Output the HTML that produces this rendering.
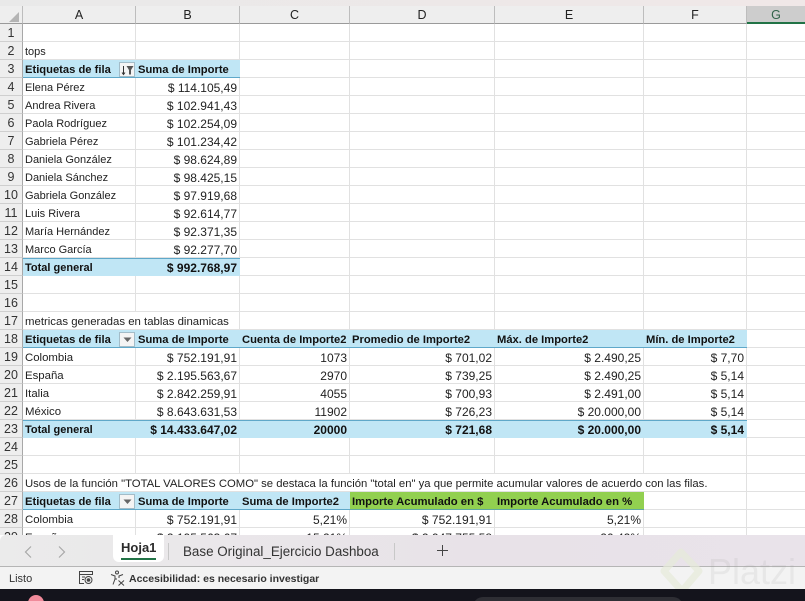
<!DOCTYPE html>
<html>
<head>
<meta charset="utf-8">
<style>
html,body{margin:0;padding:0;width:805px;height:601px;overflow:hidden;background:#fff;}
body{position:relative;font-family:"Liberation Sans",sans-serif;color:#1c1c1c;}
.abs{position:absolute;}
#top{left:0;top:0;width:805px;height:6px;background:linear-gradient(90deg,#e9e9e9,#f0e8e8);}
#colh{left:0;top:6px;width:805px;height:18px;background:#eeeeee;}
#colh div{position:absolute;top:0;height:18px;line-height:18px;text-align:center;font-size:12.5px;color:#222;border-right:1px solid #bdbdbd;box-sizing:border-box;border-bottom:1px solid #9a9a9a;}
#colh .g{background:#cdcdcd;color:#33634a;border-right:0;border-bottom:2px solid #217346;}
#sheet{left:0;top:24px;width:805px;height:511px;overflow:hidden;}
table{border-collapse:separate;border-spacing:0;table-layout:fixed;width:805px;font-size:11px;}
td{height:18px;padding:3px 2px 0;box-sizing:border-box;border-right:1px solid #e1e1e1;border-bottom:1px solid #e1e1e1;white-space:nowrap;overflow:hidden;line-height:14px;color:#222;vertical-align:top;}
td.n{background:#eeeeee;text-align:center;padding:1px 0 0;line-height:16px;font-size:12.5px;color:#333;border-right:1px solid #a8a8a8;border-bottom:1px solid #cfcfcf;}
td.r{text-align:right;font-size:12px;}
td.c{font-size:11.4px;}
td.h{background:#c0e6f5;font-weight:bold;font-size:11.2px;border-right:0;border-bottom:1px solid #5fa8c9;color:#111;position:relative;}
td.t{background:#c0e6f5;font-weight:bold;border-right:0;border-bottom:0;border-top:1px solid #5fa8c9;padding-top:2px;color:#111;}
td.t.r{padding-right:3px;}
td.v{background:#92d050;font-weight:bold;font-size:11.3px;border-right:0;border-bottom:1px solid #5fa8a0;color:#111;}
td.lr{border-right:0;}
.btn{position:absolute;right:1px;top:2px;width:16px;height:15px;box-sizing:border-box;background:#f4f4f4;border:1px solid #a3bcc8;}
#tabs{left:0;top:535px;width:805px;height:32px;background:linear-gradient(90deg,#ebebeb,#e8e2e8 60%,#e9e3ea);border-bottom:1px solid #b5b5b5;box-sizing:border-box;border-radius:6px 0 0 0;}
#status{left:0;top:567px;width:805px;height:22px;background:#f3f3f3;}
#black{left:0;top:589px;width:805px;height:12px;background:#14141c;overflow:hidden;}
</style>
</head>
<body>
<div class="abs" id="top"></div>
<div class="abs" id="colh">
<div style="left:0;width:23px"></div>
<div style="left:23px;width:113px">A</div>
<div style="left:136px;width:104px">B</div>
<div style="left:240px;width:110px">C</div>
<div style="left:350px;width:145px">D</div>
<div style="left:495px;width:149px">E</div>
<div style="left:644px;width:103px">F</div>
<div class="g" style="left:747px;width:58px">G</div>
<svg style="position:absolute;left:8px;top:6px" width="13" height="11"><path d="M11 0V10H1Z" fill="#b4b4b4"/></svg>
</div>
<div class="abs" id="sheet">
<table>
<colgroup><col style="width:23px"><col style="width:113px"><col style="width:104px"><col style="width:110px"><col style="width:145px"><col style="width:149px"><col style="width:103px"><col style="width:58px"></colgroup>
<tr><td class="n">1</td><td></td><td></td><td></td><td></td><td></td><td></td><td class="lr"></td></tr>
<tr><td class="n">2</td><td>tops</td><td></td><td></td><td></td><td></td><td></td><td class="lr"></td></tr>
<tr><td class="n">3</td><td class="h">Etiquetas de fila<span class="btn"><svg style="position:absolute;left:1px;top:1px" width="13" height="12"><path d="M2.500 2V10M1 8.500L2.500 10.500L4 8.500" stroke="#333" fill="none"/><path d="M5.500 2H12.500L10 6V10.500H8V6Z" fill="#555"/></svg></span></td><td class="h">Suma de Importe</td><td></td><td></td><td></td><td></td><td class="lr"></td></tr>
<tr><td class="n">4</td><td>Elena Pérez</td><td class="r">$ 114.105,49</td><td></td><td></td><td></td><td></td><td class="lr"></td></tr>
<tr><td class="n">5</td><td>Andrea Rivera</td><td class="r">$ 102.941,43</td><td></td><td></td><td></td><td></td><td class="lr"></td></tr>
<tr><td class="n">6</td><td>Paola Rodríguez</td><td class="r">$ 102.254,09</td><td></td><td></td><td></td><td></td><td class="lr"></td></tr>
<tr><td class="n">7</td><td>Gabriela Pérez</td><td class="r">$ 101.234,42</td><td></td><td></td><td></td><td></td><td class="lr"></td></tr>
<tr><td class="n">8</td><td>Daniela González</td><td class="r">$ 98.624,89</td><td></td><td></td><td></td><td></td><td class="lr"></td></tr>
<tr><td class="n">9</td><td>Daniela Sánchez</td><td class="r">$ 98.425,15</td><td></td><td></td><td></td><td></td><td class="lr"></td></tr>
<tr><td class="n">10</td><td>Gabriela González</td><td class="r">$ 97.919,68</td><td></td><td></td><td></td><td></td><td class="lr"></td></tr>
<tr><td class="n">11</td><td>Luis Rivera</td><td class="r">$ 92.614,77</td><td></td><td></td><td></td><td></td><td class="lr"></td></tr>
<tr><td class="n">12</td><td>María Hernández</td><td class="r">$ 92.371,35</td><td></td><td></td><td></td><td></td><td class="lr"></td></tr>
<tr><td class="n">13</td><td>Marco García</td><td class="r">$ 92.277,70</td><td></td><td></td><td></td><td></td><td class="lr"></td></tr>
<tr><td class="n">14</td><td class="t">Total general</td><td class="t r">$ 992.768,97</td><td></td><td></td><td></td><td></td><td class="lr"></td></tr>
<tr><td class="n">15</td><td></td><td></td><td></td><td></td><td></td><td></td><td class="lr"></td></tr>
<tr><td class="n">16</td><td></td><td></td><td></td><td></td><td></td><td></td><td class="lr"></td></tr>
<tr><td class="n">17</td><td colspan="2" style="font-size:11.4px">metricas generadas en tablas dinamicas</td><td></td><td></td><td></td><td></td><td class="lr"></td></tr>
<tr><td class="n">18</td><td class="h">Etiquetas de fila<span class="btn"><svg style="position:absolute;left:3px;top:4px" width="9" height="6"><path d="M0.500 0.500H8.500L4.500 5Z" fill="#666"/></svg></span></td><td class="h">Suma de Importe</td><td class="h">Cuenta de Importe2</td><td class="h">Promedio de Importe2</td><td class="h">Máx. de Importe2</td><td class="h">Mín. de Importe2</td><td class="lr"></td></tr>
<tr><td class="n">19</td><td class="c">Colombia</td><td class="r">$ 752.191,91</td><td class="r">1073</td><td class="r">$ 701,02</td><td class="r">$ 2.490,25</td><td class="r">$ 7,70</td><td class="lr"></td></tr>
<tr><td class="n">20</td><td class="c">España</td><td class="r">$ 2.195.563,67</td><td class="r">2970</td><td class="r">$ 739,25</td><td class="r">$ 2.490,25</td><td class="r">$ 5,14</td><td class="lr"></td></tr>
<tr><td class="n">21</td><td class="c">Italia</td><td class="r">$ 2.842.259,91</td><td class="r">4055</td><td class="r">$ 700,93</td><td class="r">$ 2.491,00</td><td class="r">$ 5,14</td><td class="lr"></td></tr>
<tr><td class="n">22</td><td class="c">México</td><td class="r">$ 8.643.631,53</td><td class="r">11902</td><td class="r">$ 726,23</td><td class="r">$ 20.000,00</td><td class="r">$ 5,14</td><td class="lr"></td></tr>
<tr><td class="n">23</td><td class="t">Total general</td><td class="t r">$ 14.433.647,02</td><td class="t r">20000</td><td class="t r">$ 721,68</td><td class="t r">$ 20.000,00</td><td class="t r">$ 5,14</td><td class="lr"></td></tr>
<tr><td class="n">24</td><td></td><td></td><td></td><td></td><td></td><td></td><td class="lr"></td></tr>
<tr><td class="n">25</td><td></td><td></td><td></td><td></td><td></td><td></td><td class="lr"></td></tr>
<tr><td class="n">26</td><td colspan="6" style="font-size:11.3px">Usos de la función "TOTAL VALORES COMO" se destaca la función "total en" ya que permite acumular valores de acuerdo con las filas.</td><td class="lr"></td></tr>
<tr><td class="n">27</td><td class="h">Etiquetas de fila<span class="btn"><svg style="position:absolute;left:3px;top:4px" width="9" height="6"><path d="M0.500 0.500H8.500L4.500 5Z" fill="#666"/></svg></span></td><td class="h">Suma de Importe</td><td class="h">Suma de Importe2</td><td class="v">Importe Acumulado en $</td><td class="v">Importe Acumulado en %</td><td></td><td class="lr"></td></tr>
<tr><td class="n">28</td><td class="c">Colombia</td><td class="r">$ 752.191,91</td><td class="r">5,21%</td><td class="r">$ 752.191,91</td><td class="r">5,21%</td><td></td><td class="lr"></td></tr>
<tr><td class="n">29</td><td class="c">España</td><td class="r">$ 2.195.563,67</td><td class="r">15,21%</td><td class="r">$ 2.947.755,58</td><td class="r">20,42%</td><td></td><td class="lr"></td></tr>
</table>
</div>
<div class="abs" id="tabs">
<svg style="position:absolute;left:22px;top:10px" width="12" height="14"><path d="M9 1.500L3.500 7L9 12.500" stroke="#a8a8a8" stroke-width="1.200" fill="none"/></svg>
<svg style="position:absolute;left:56px;top:10px" width="12" height="14"><path d="M3 1.500L8.500 7L3 12.500" stroke="#a8a8a8" stroke-width="1.200" fill="none"/></svg>
<div class="abs" style="left:113px;top:0;width:51px;height:27px;background:#fff;border-radius:0 0 6px 6px;"></div>
<div class="abs" style="left:121px;top:5px;font-size:13px;font-weight:bold;color:#2b2b2b;line-height:16px;">Hoja1</div>
<div class="abs" style="left:121px;top:23px;width:35px;height:2px;background:#217346;"></div>
<div class="abs" style="left:168px;top:8px;width:1px;height:17px;background:#c8c8c8;"></div>
<div class="abs" style="left:183px;top:8px;font-size:13.4px;color:#333;line-height:17px;white-space:nowrap;">Base Original_Ejercicio Dashboa</div>
<div class="abs" style="left:394px;top:8px;width:1px;height:17px;background:#c8c8c8;"></div>
<svg style="position:absolute;left:436px;top:9px" width="13" height="13"><path d="M6.500 1V12M1 6.500H12" stroke="#444" stroke-width="1"/></svg>
</div>
<div class="abs" id="status">
<div class="abs" style="left:9px;top:5px;font-size:11px;color:#333;line-height:14px;">Listo</div>
<svg style="position:absolute;left:79px;top:4px" width="15" height="14" fill="none" stroke="#444"><path d="M.5.500H13.500V3.500H.5ZM.5 3.500V12.500H5M3 6H6M3 8.500H5"/><circle cx="9.500" cy="9" r="3.500"/><circle cx="9.500" cy="9" r="1.300" fill="#444"/></svg>
<svg style="position:absolute;left:110px;top:3px" width="16" height="16" fill="none" stroke="#444"><circle cx="7" cy="2.500" r="1.500"/><path d="M1 4.500L5 6V9L3 14.500M13 4.500L9 6V8M5 9H7M8.500 10.500L14 15.500M14 10.500L8.500 15.500"/></svg>
<div class="abs" style="left:129px;top:5px;font-size:10.500px;font-weight:bold;color:#333;line-height:14px;white-space:nowrap;">Accesibilidad: es necesario investigar</div>
</div>
<svg class="abs" style="left:660px;top:545px" width="145" height="50">
<path d="M21 7L39 26L22 46L4 26Z" fill="none" stroke="#e6e9d8" stroke-width="7" stroke-linejoin="round" opacity=".7"/>
<text x="48" y="39" font-family="Liberation Sans, sans-serif" font-size="36" fill="#9a9a9a" fill-opacity=".13">Platzi</text>
</svg>
<div class="abs" id="black">
<div class="abs" style="left:28px;top:6px;width:16px;height:16px;border-radius:8px;background:#f08a9a;"></div>
<div class="abs" style="left:473px;top:8px;width:210px;height:20px;border-radius:10px 10px 0 0;background:#2e2e34;"></div>
</div>
</body>
</html>
